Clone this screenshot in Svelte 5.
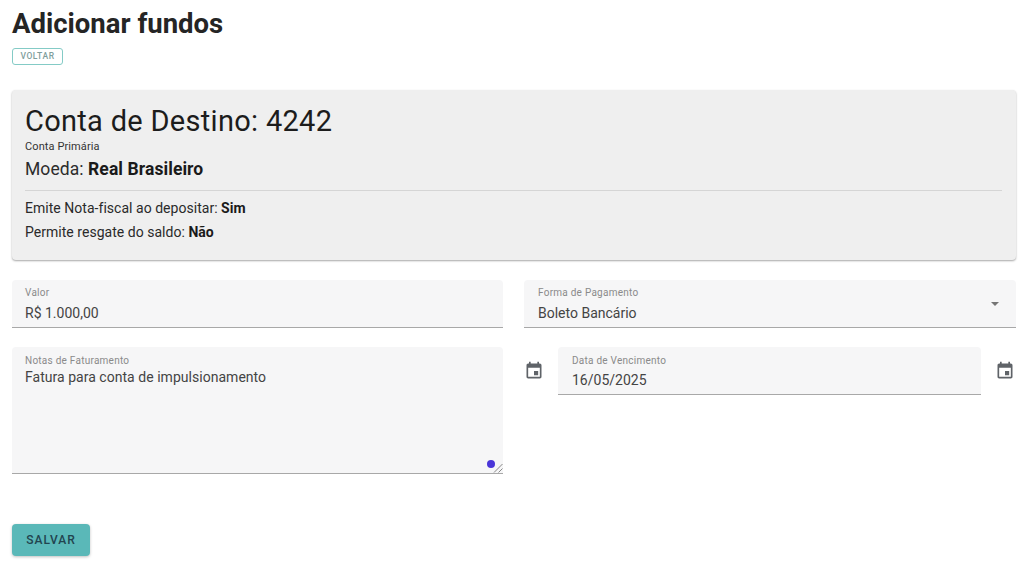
<script>
  const calendarPath = "M17 12h-5v5h5v-5zM16 1v2H8V1H6v2H5c-1.11 0-1.99.9-1.99 2L3 19c0 1.1.89 2 2 2h14c1.1 0 2-.9 2-2V5c0-1.1-.9-2-2-2h-1V1h-2zm3 18H5V8h14v11z";
</script>

<main class="page">
  <h1>Adicionar fundos</h1>
  <button class="back">VOLTAR</button>

  <section class="card">
    <h2>Conta de Destino: 4242</h2>
    <div class="caption">Conta Primária</div>
    <div class="currency">Moeda: <b>Real Brasileiro</b></div>
    <hr />
    <p class="first">Emite Nota-fiscal ao depositar: <b>Sim</b></p>
    <p>Permite resgate do saldo: <b>Não</b></p>
  </section>

  <div class="grid">
    <div class="field left">
      <span class="label">Valor</span>
      <span class="value">R$ 1.000,00</span>
    </div>
    <div class="field select">
      <span class="label">Forma de Pagamento</span>
      <span class="value">Boleto Bancário</span>
      <span class="arrow"></span>
    </div>

    <div class="field left area">
      <span class="label">Notas de Faturamento</span>
      <span class="value tight">Fatura para conta de impulsionamento</span>
      <span class="dot"></span>
      <svg class="grip" viewBox="0 0 10 10" width="10" height="10">
        <path d="M1 9.5 9.5 1M5.5 9.5 9.5 5.5" stroke="#888" stroke-width="1" fill="none" />
      </svg>
    </div>
    <div class="date-row">
      <svg class="cal" viewBox="0 0 24 24" width="20" height="20"><path d={calendarPath} /></svg>
      <div class="field date">
        <span class="label">Data de Vencimento</span>
        <span class="value">16/05/2025</span>
      </div>
      <svg class="cal last" viewBox="0 0 24 24" width="20" height="20"><path d={calendarPath} /></svg>
    </div>
  </div>

  <button class="save">SALVAR</button>
</main>

<style>
  :global(body) {
    margin: 0;
    background: #fff;
  }
  .page {
    box-sizing: border-box;
    width: 1024px;
    height: 580px;
    padding: 9px 8px 0 12px;
    font-family: Roboto, "Liberation Sans", sans-serif;
    color: #212121;
    overflow: hidden;
  }
  h1 {
    margin: 0;
    font-size: 27.5px;
    line-height: 30px;
    font-weight: 700;
    color: #252525;
  }
  .back {
    display: block;
    box-sizing: border-box;
    width: 51px;
    height: 17px;
    margin: 9px 0 0;
    padding: 0;
    border: 1px solid #84cbc6;
    border-radius: 3px;
    background: #fff;
    color: #7f9e9c;
    font: 500 8.5px/15px Roboto, sans-serif;
    letter-spacing: 0.6px;
    text-align: center;
  }
  .card {
    box-sizing: border-box;
    height: 170px;
    margin-top: 25px;
    padding: 15px 14px 0 13px;
    background: #efefef;
    border-radius: 4px;
    box-shadow: 0 1px 2px rgba(0, 0, 0, 0.35);
    color: #1c1c1c;
  }
  h2 {
    margin: 0;
    font-size: 29px;
    line-height: 33px;
    font-weight: 400;
    letter-spacing: 0.3px;
  }
  .caption {
    margin-top: 2px;
    font-size: 11px;
    line-height: 14px;
    letter-spacing: 0.1px;
    color: #333;
  }
  .currency {
    margin-top: 5px;
    font-size: 17.5px;
    line-height: 20px;
    letter-spacing: 0.08px;
    color: #2c2c2c;
  }
  .currency b,
  p b {
    font-weight: 700;
    color: #1a1a1a;
  }
  hr {
    margin: 11px 0 0;
    border: 0;
    border-top: 1px solid #d5d5d5;
  }
  p {
    margin: 7px 0 0;
    font-size: 14px;
    line-height: 17px;
    color: #2a2a2a;
    letter-spacing: 0.03px;
  }
  p.first {
    margin-top: 9px;
  }
  .grid {
    display: grid;
    grid-template-columns: 491px 492px;
    grid-template-rows: 48px 127px;
    column-gap: 21px;
    row-gap: 19px;
    margin-top: 20px;
  }
  .field {
    position: relative;
    box-sizing: border-box;
    display: flex;
    flex-direction: column;
    padding: 7px 14px 0;
    background: #f6f6f7;
    border-bottom: 1px solid #a8a8a8;
    border-radius: 4px 4px 0 0;
  }
  .field.left {
    padding-left: 13px;
  }
  .label {
    font-size: 10px;
    line-height: 12px;
    color: #8a8a8a;
    letter-spacing: 0.25px;
  }
  .value {
    margin-top: 6px;
    font-size: 14px;
    line-height: 17px;
    color: #444;
  }
  .value.tight {
    margin-top: 1px;
    line-height: 18px;
    letter-spacing: 0.03px;
  }
  .area {
    padding-top: 8px;
  }
  .arrow {
    position: absolute;
    right: 17px;
    top: 22px;
    border-left: 4.5px solid transparent;
    border-right: 4.5px solid transparent;
    border-top: 4.5px solid #757575;
  }
  .dot {
    position: absolute;
    right: 8px;
    bottom: 5px;
    width: 8px;
    height: 8px;
    border-radius: 50%;
    background: #4a35d8;
  }
  .grip {
    position: absolute;
    right: 0;
    bottom: 0;
  }
  .date-row {
    display: flex;
    align-items: flex-start;
    column-gap: 14px;
  }
  .date {
    flex: 1;
    height: 48px;
    padding-top: 8px;
  }
  .date .value {
    margin-top: 5px;
  }
  .cal {
    flex: none;
    margin-top: 14px;
    fill: #5f6368;
  }
  .cal.last {
    margin-right: 1px;
  }
  .save {
    display: block;
    box-sizing: border-box;
    width: 78px;
    height: 32px;
    margin-top: 50px;
    padding: 0;
    border: 0;
    border-radius: 4px;
    background: #5ab8b8;
    box-shadow: 0 1px 3px rgba(0, 0, 0, 0.25);
    color: #22444f;
    font: 500 12px/31px Roboto, sans-serif;
    letter-spacing: 1px;
    text-align: center;
  }
</style>
